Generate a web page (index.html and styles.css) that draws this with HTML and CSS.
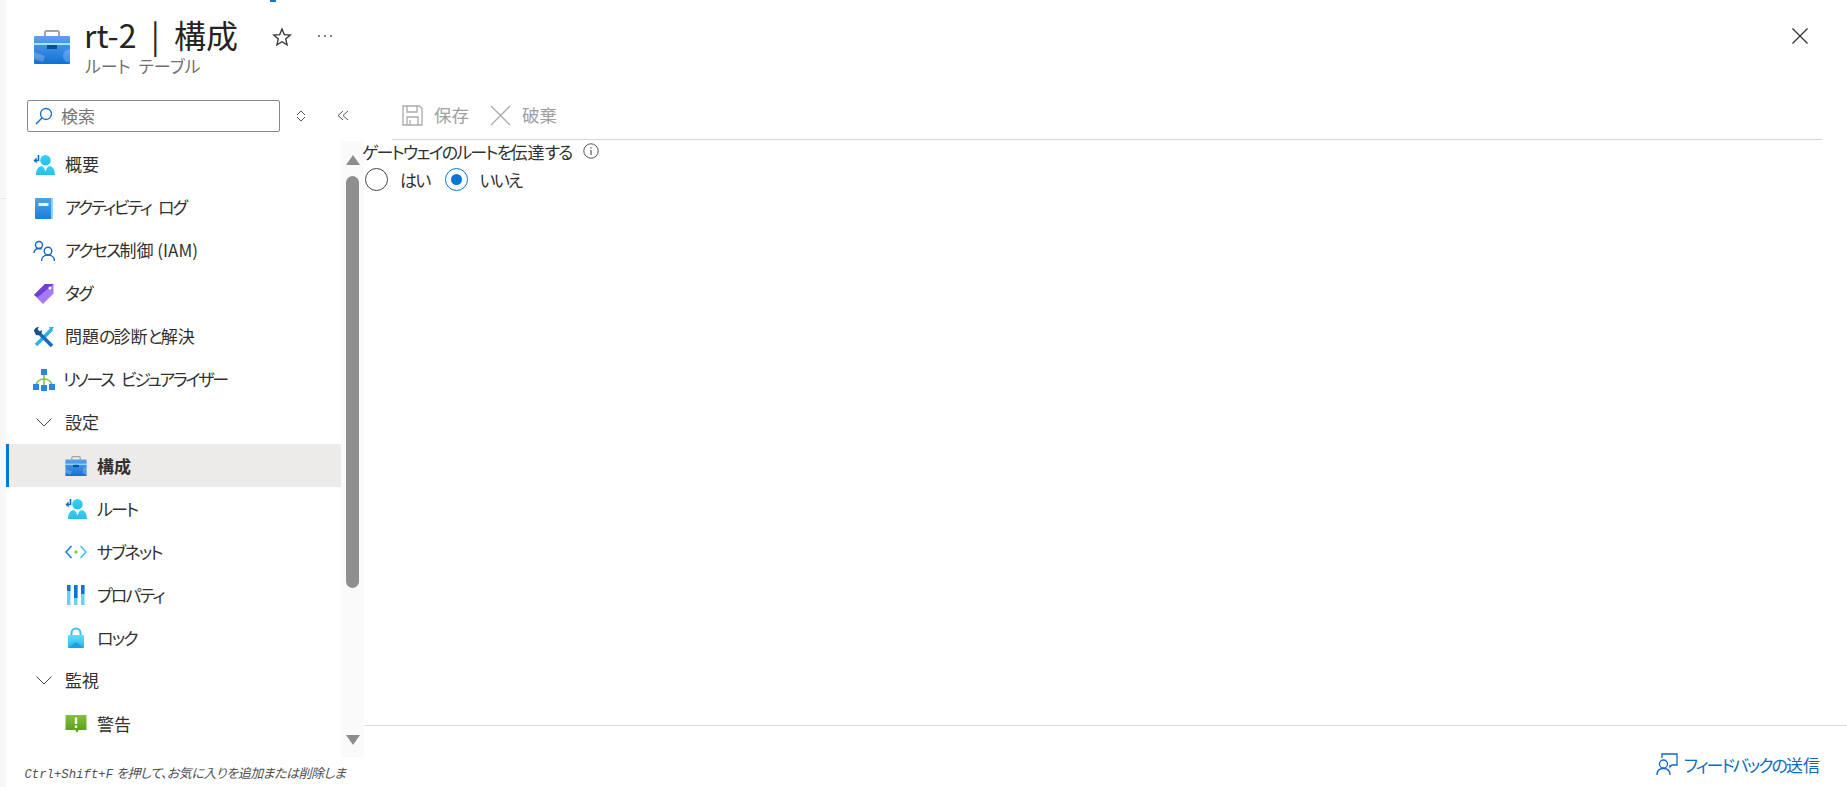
FILE: index.html
```html
<!DOCTYPE html>
<html lang="ja">
<head>
<meta charset="utf-8">
<title>rt-2 | 構成</title>
<link rel="stylesheet" href="styles.css">
</head>
<body>
<svg class="defs" width="0" height="0" aria-hidden="true">
  <defs>
    <linearGradient id="gb" x1="0" y1="0" x2="0" y2="1"><stop offset="0" stop-color="#5ea0ef"/><stop offset="1" stop-color="#0f72d4"/></linearGradient>
    <linearGradient id="gk" x1="0" y1="0" x2="0" y2="1"><stop offset="0" stop-color="#4ea3ea"/><stop offset="1" stop-color="#1a80dc"/></linearGradient>
    <linearGradient id="gc" x1="0" y1="0" x2="0" y2="1"><stop offset="0" stop-color="#32d4f5"/><stop offset="1" stop-color="#25bde8"/></linearGradient>
    <linearGradient id="gl" x1="0" y1="0" x2="0" y2="1"><stop offset="0" stop-color="#5fe0f8"/><stop offset="1" stop-color="#26b5ea"/></linearGradient>
    <linearGradient id="gg" x1="0" y1="0" x2="0" y2="1"><stop offset="0" stop-color="#86c232"/><stop offset="1" stop-color="#4f9a1c"/></linearGradient>
    <symbol id="i-case" viewBox="0 0 36 34">
      <path d="M11 7V2.500C11 1.600 11.600 1 12.500 1h11c.9 0 1.500.6 1.500 1.500V7" fill="none" stroke="#a3a3a3" stroke-width="2"/>
      <rect y="6" width="36" height="28" rx="1" fill="url(#gb)"/>
      <rect y="13" width="36" height="2" fill="#9cebff"/>
      <path d="M0 22l11 4-2 6-9-3zM36 19a7 7 0 0 0-7 7 7 7 0 0 0 4 6h3z" fill="#fff" opacity=".22"/>
      <rect x="13" y="15" width="10" height="4" fill="#0a4f96"/>
    </symbol>
    <symbol id="i-route" viewBox="0 0 22 20">
      <circle cx="12.500" cy="5.200" r="5.200" fill="url(#gc)"/>
      <path d="M3 20c0-6 3-9 6-9l3.500 3 3.500-3c3 0 6 3 6 9z" fill="url(#gc)"/>
      <path d="M10.500 11.500h4l-2 5z" fill="#e8fbff"/>
      <path d="M5.500 0v5.500H1.500" fill="none" stroke="#0f6cc9" stroke-width="1.600"/>
      <path d="M3.600 2.500L0.500 5.500l3.100 3z" fill="#0f6cc9"/>
    </symbol>
  </defs>
</svg>
<span class="top-mark"></span>
<div class="page">
  <div class="strip"><span class="strip-line"></span></div>
  <div class="blade">
    <header class="head">
      <svg class="head-icon" width="36" height="34"><use href="#i-case"/></svg>
      <div class="head-text">
        <h1 class="title">rt-2<span class="sep">|</span>構成</h1>
        <div class="subtitle">ルート テーブル</div>
      </div>
      <svg class="star" width="20" height="20" viewBox="0 0 20 20"><path d="M10 2l2.300 5.600 6 .5-4.600 3.900 1.400 5.900L10 14.800 4.900 17.900l1.400-5.900L1.700 8.100l6-.5z" fill="none" stroke="#333" stroke-width="1.300"/></svg>
      <svg class="more" width="16" height="4" viewBox="0 0 16 4"><circle cx="2" cy="2" r="1" fill="#555"/><circle cx="8" cy="2" r="1" fill="#555"/><circle cx="14" cy="2" r="1" fill="#555"/></svg>
      <svg class="close" width="18" height="18" viewBox="0 0 18 18"><path d="M1.500 1.500l15 15M16.500 1.500l-15 15" stroke="#333" stroke-width="1.300"/></svg>
    </header>
    <div class="body">
      <aside class="side">
        <div class="search-row">
          <div class="search">
            <svg width="18" height="18" viewBox="0 0 18 18"><circle cx="11" cy="7" r="5.500" fill="none" stroke="#0f6cc9" stroke-width="1.300"/><path d="M7 11l-6 6" stroke="#0f6cc9" stroke-width="1.500"/></svg>
            <span>検索</span>
          </div>
          <svg class="updown" width="10" height="12" viewBox="0 0 10 12"><path d="M1 5L5 1l4 4M1 7l4 4 4-4" fill="none" stroke="#555" stroke-width="1"/></svg>
          <svg class="collapse" width="12" height="11" viewBox="0 0 12 11"><path d="M6 1L1 5.500 6 10M11 1L6 5.500 11 10" fill="none" stroke="#555" stroke-width="1"/></svg>
        </div>
        <div class="nav-wrap">
          <nav class="nav">
            <a class="row"><svg class="ic" width="22" height="20"><use href="#i-route"/></svg><span>概要</span></a>
            <a class="row"><svg class="ic" width="22" height="22" viewBox="0 0 22 22"><rect x="2" y="1" width="18" height="21" rx="1" fill="url(#gk)"/><path d="M18 1h2v21h-2z" fill="#9ccbf5"/><rect x="5.500" y="6" width="10" height="3" fill="#e8f4ff"/></svg><span class="k w">アクティビティ ログ</span></a>
            <a class="row"><svg class="ic" width="22" height="22" viewBox="0 0 22 22"><g fill="none" stroke="#1266cc" stroke-width="1.400"><circle cx="6" cy="5" r="3.500"/><path d="M1 13c0-3 2-4.500 5-4.500 1 0 2 .2 2.800.6"/><circle cx="15" cy="11" r="3.800"/><path d="M8.500 21c0-3.500 2.500-6 6.500-6s6.500 2.500 6.500 6"/></g></svg><span><span class="k">アクセス</span>制御 (IAM)</span></a>
            <a class="row"><svg class="ic" width="22" height="22" viewBox="0 0 22 22"><path d="M1 12L12 1h8.500v9.500L10 21z" fill="#a67af4"/><path d="M1 12L12 1h8.500L5 14z" fill="#6f3fd0"/><circle cx="17" cy="5" r="1.500" fill="#fff"/></svg><span class="k">タグ</span></a>
            <a class="row"><svg class="ic" width="22" height="22" viewBox="0 0 22 22"><path d="M3 19L19 3" stroke="#2bb4e8" stroke-width="3.500"/><path d="M16 1l5 0-3 4z" fill="#2bb4e8"/><path d="M3 4l16 16" stroke="#0f6cc9" stroke-width="3.500"/><path d="M1 5a4.500 4.500 0 0 1 5-4l-2 3 2 2 3-2a4.500 4.500 0 0 1-6 5z" fill="#1f4e79"/></svg><span>問題<span class="k">の</span>診断<span class="k">と</span>解決</span></a>
            <a class="row tight"><svg class="ic" width="22" height="22" viewBox="0 0 22 22"><path d="M11 6v10M3 16c1-4 4-6 8-6s7 2 8 6" fill="none" stroke="#86c232" stroke-width="1.500"/><rect x="8" y="0" width="6" height="6" fill="#2d86e0"/><rect x="0" y="15" width="6" height="6" fill="#2d86e0"/><rect x="8" y="16" width="6" height="6" fill="#2d86e0"/><rect x="16" y="15" width="6" height="6" fill="#2d86e0"/></svg><span class="k w">リソース ビジュアライザー</span></a>
            <a class="row"><svg class="ic chev" width="22" height="9" viewBox="0 0 22 9"><path d="M3.500.500L11 8l7.500-7.500" fill="none" stroke="#444" stroke-width="1"/></svg><span>設定</span></a>
            <a class="row sub active"><svg class="ic" width="22" height="20"><use href="#i-case"/></svg><span>構成</span></a>
            <a class="row sub"><svg class="ic" width="22" height="20"><use href="#i-route"/></svg><span class="k">ルート</span></a>
            <a class="row sub"><svg class="ic" width="22" height="14" viewBox="0 0 22 14"><path d="M6.500 1L1 7l5.500 6" fill="none" stroke="#1a7fe0" stroke-width="1.600"/><path d="M15.500 1L21 7l-5.500 6" fill="none" stroke="#3fc4f2" stroke-width="1.600"/><circle cx="11" cy="7" r="1.600" fill="#86c232"/></svg><span class="k">サブネット</span></a>
            <a class="row sub"><svg class="ic" width="22" height="20" viewBox="-2 0 22 20"><rect width="3.500" height="20" fill="#5fd4f5"/><rect x="7" width="3.500" height="20" fill="#5fd4f5"/><rect x="14" width="3.500" height="20" fill="#5fd4f5"/><rect width="3.500" height="6" fill="#1273d6"/><rect x="7" width="3.500" height="13" fill="#1273d6"/><rect x="14" width="3.500" height="9" fill="#1273d6"/></svg><span class="k">プロパティ</span></a>
            <a class="row sub"><svg class="ic" width="22" height="21" viewBox="-3 0 22 21"><path d="M3.500 9V6a4.500 4.500 0 0 1 9 0v3" fill="none" stroke="#3fc4f2" stroke-width="2"/><rect y="8" width="16" height="13" rx="1" fill="url(#gl)"/><path d="M0 21l8-6 8 6z" fill="#19a3db"/></svg><span class="k">ロック</span></a>
            <a class="row"><svg class="ic chev" width="22" height="9" viewBox="0 0 22 9"><path d="M3.500.500L11 8l7.500-7.500" fill="none" stroke="#444" stroke-width="1"/></svg><span>監視</span></a>
            <a class="row sub"><svg class="ic" width="22" height="18" viewBox="0 0 21 18"><path d="M0 0h21v15h-8l-1.500 3-1.500-3H0z" fill="url(#gg)"/><rect x="9.300" y="2.500" width="2.400" height="6.500" fill="#fff"/><rect x="9.300" y="10.500" width="2.400" height="2.400" fill="#fff"/></svg><span>警告</span></a>
          </nav>
          <div class="scrollbar">
            <span class="arrow up"></span>
            <span class="thumb"></span>
            <span class="arrow down"></span>
          </div>
        </div>
        <p class="hint"><i class="mono">Ctrl+Shift+F</i> <span class="h">を押して、お気に入りを追加または削除しま<br>す。</span></p>
      </aside>
      <main class="main">
        <div class="toolbar">
          <span class="tool">
            <svg width="21" height="21" viewBox="0 0 21 21"><path d="M1 1h16.500L20 3.500V20H1z" fill="none" stroke="#aaa" stroke-width="1.300"/><path d="M5 1v6h10V1M5 20v-8h11v8M8 15v5" fill="none" stroke="#aaa" stroke-width="1.300"/></svg>
            <span>保存</span>
          </span>
          <span class="tool">
            <svg width="21" height="21" viewBox="0 0 21 21"><path d="M1 1l19 19M20 1L1 20" stroke="#aaa" stroke-width="1.300"/></svg>
            <span>破棄</span>
          </span>
        </div>
        <div class="content">
          <div class="label"><span><span class="k">ゲートウェイのルートを</span>伝達<span class="k">する</span></span>
            <svg width="16" height="16" viewBox="0 0 16 16"><circle cx="8" cy="8" r="7.200" fill="none" stroke="#555" stroke-width="1"/><rect x="7.400" y="7" width="1.200" height="5" fill="#555"/><rect x="7.400" y="4.200" width="1.200" height="1.400" fill="#555"/></svg>
          </div>
          <div class="radios">
            <span class="radio"></span><span class="radio-text k">はい</span>
            <span class="radio on"></span><span class="radio-text k">いいえ</span>
          </div>
        </div>
        <footer class="foot">
          <svg width="22" height="23" viewBox="0 0 22 23"><g fill="none" stroke="#1266cc" stroke-width="1.300"><path d="M6 5V1h15v11h-5l-2 2 0-2"/><circle cx="7.500" cy="11" r="4"/><path d="M1 22c0-4 2.500-6.500 6.500-6.500S14 18 14 22"/></g></svg>
          <span><span class="k">フィードバックの</span>送信</span>
        </footer>
      </main>
    </div>
  </div>
</div>
</body>
</html>
```
FILE: styles.css
```css
* { box-sizing: border-box; }
html, body { margin: 0; height: 787px; overflow: hidden; background: #fff; }
body {
  font-family: "Noto Sans CJK JP", "Noto Sans", sans-serif;
  font-feature-settings: "palt";
  font-size: 17px;
  color: #323130;
}
.k { letter-spacing: -1.800px; }
.k.w { letter-spacing: -2.200px; word-spacing: 6px; }
.defs { position: absolute; }
.top-mark { position: absolute; left: 270px; top: 0; width: 6px; height: 2px; background: #0078d4; }
.page { display: flex; height: 787px; }
.strip { width: 6px; flex: none; background: #f7f7f7; padding-top: 198px; }
.strip-line { display: block; height: 1px; background: #e4e4e4; }
.blade { flex: 1; display: flex; flex-direction: column; min-width: 0; }

.head { height: 100px; flex: none; display: flex; align-items: flex-start; padding: 0 38px 0 28px; }
.head-icon { margin-top: 30px; flex: none; }
.head-text { margin-left: 14px; margin-top: 12px; width: 174px; }
.title { margin: 0; font-size: 32px; font-weight: 400; line-height: 45px; color: #252423; white-space: nowrap; }
.sep { margin: 0 14.500px; }
.subtitle { font-size: 17px; line-height: 20px; color: #707070; margin: -1px 0 0 1px; word-spacing: 4px; }
.star { margin-top: 27px; margin-left: 14px; flex: none; }
.more { margin-top: 34px; margin-left: 25px; flex: none; }
.close { margin-top: 27px; margin-left: auto; flex: none; }

.body { flex: 1; display: flex; min-height: 0; }
.side { width: 358px; flex: none; display: flex; flex-direction: column; }
.search-row { height: 41px; flex: none; display: flex; align-items: flex-start; padding-left: 21px; }
.search {
  width: 253px; height: 32px; display: flex; align-items: center; gap: 8px; padding: 0 0 2px 7px;
  border: 1px solid #8a8886; border-radius: 2px; color: #777; font-size: 17px;
}
.search svg { margin-top: 2px; }
.updown { margin: 10px 0 0 16px; }
.collapse { margin: 10px 0 0 31px; }

.nav-wrap { flex: 1; display: flex; min-height: 0; }
.nav { width: 335px; flex: none; padding-top: 2px; overflow: hidden; }
.row { height: 43px; display: flex; align-items: center; padding-left: 27px; white-space: nowrap; color: #323130; }
.row span { position: relative; top: -1px; }
.row span span, .row.sub span { top: 0; }
.row .ic { flex: none; margin-right: 10px; }
.row.tight .ic { margin-right: 8px; }
.row.sub { padding-left: 59px; }
.row.active { background: #edebe9; border-left: 3px solid #0078d4; padding-left: 56px; font-weight: 700; }

.scrollbar { width: 23px; flex: none; background: #fafafa; display: flex; flex-direction: column; align-items: center; padding: 14px 0 0; }
.arrow { width: 0; height: 0; border-left: 7.500px solid transparent; border-right: 7.500px solid transparent; flex: none; }
.arrow.up { border-bottom: 10px solid #8c8c8c; }
.arrow.down { border-top: 10px solid #8c8c8c; margin-top: 147px; }
.thumb { width: 13px; height: 412px; margin-top: 11px; background: #8f8f8f; border-radius: 7px; flex: none; }

.hint { flex: none; height: 30px; margin: 0; padding-top: 7px; font-size: 13px; line-height: 18px; font-style: italic; text-align: center; white-space: nowrap; color: #505050; }
.mono { font-family: "Liberation Mono", monospace; font-size: 12.300px; }
.h { letter-spacing: -.5px; }

.main { flex: 1; min-width: 0; display: flex; flex-direction: column; }
.toolbar { height: 40px; flex: none; margin: 0 25px 0 28px; border-bottom: 1px solid #d6d6d6; display: flex; align-items: flex-start; gap: 21px; padding-left: 10px; color: #a0a0a0; }
.tool { display: flex; align-items: center; gap: 11px; height: 30px; font-size: 17.500px; }
.tool span { position: relative; top: -1px; }
.content { flex: 1; }
.label { height: 26px; margin: -2px 0 0 -2px; display: flex; align-items: center; gap: 11px; white-space: nowrap; color: #323130; }
.radios { display: flex; align-items: center; height: 30px; padding-left: 1px; }
.radio { width: 23px; height: 23px; border: 1.500px solid #444; border-radius: 50%; flex: none; display: flex; align-items: center; justify-content: center; }
.radio.on { border-color: #0078d4; margin-left: 16px; }
.radio.on::after { content: ""; width: 11px; height: 11px; border-radius: 50%; background: #0078d4; }
.radio-text { margin-left: 12px; }
.radio.on + .radio-text { margin-left: 11px; }
.foot { height: 62px; flex: none; border-top: 1px solid #dcdcdc; display: flex; align-items: center; justify-content: flex-end; gap: 6px; padding: 16px 27px 0 0; color: #0f6cbd; }
.foot span span { letter-spacing: -2px; }
```
